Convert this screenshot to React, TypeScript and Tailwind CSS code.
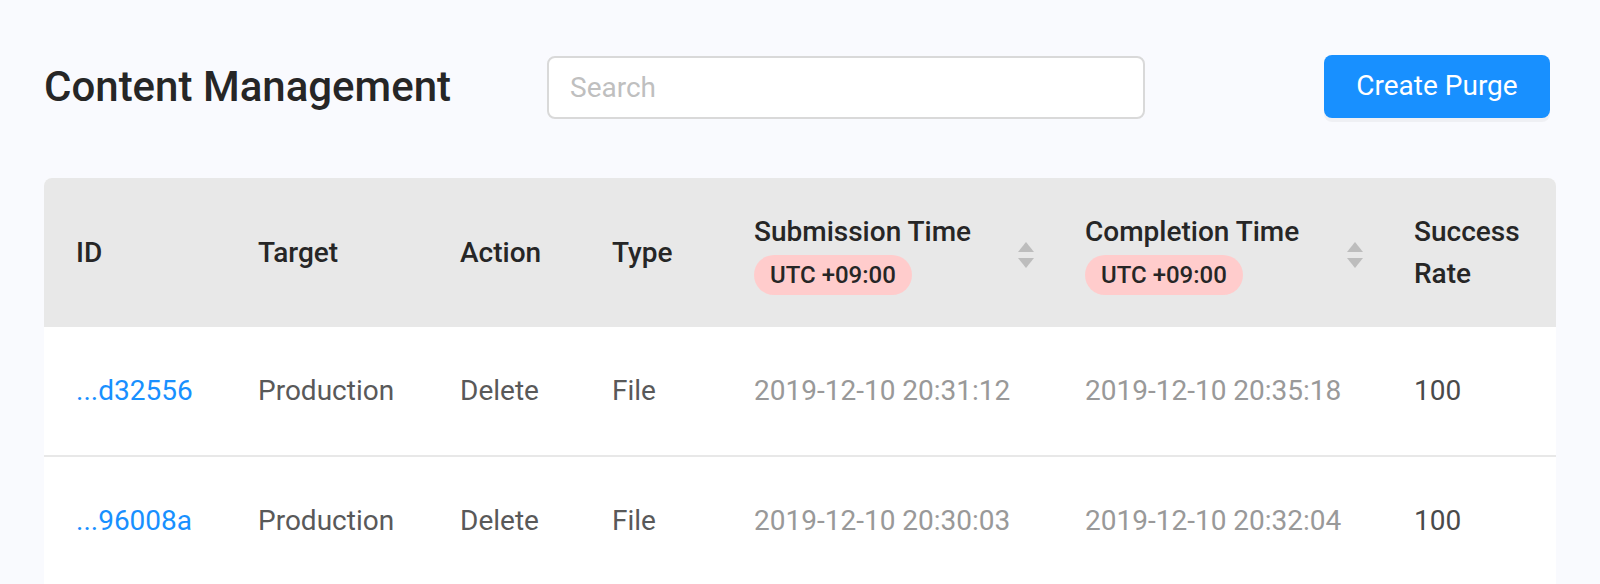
import React from 'react';

interface PurgeRow {
  id: string;
  target: string;
  action: string;
  type: string;
  submitted: string;
  completed: string;
  rate: number;
}

const rows: PurgeRow[] = [
  { id: '...d32556', target: 'Production', action: 'Delete', type: 'File', submitted: '2019-12-10 20:31:12', completed: '2019-12-10 20:35:18', rate: 100 },
  { id: '...96008a', target: 'Production', action: 'Delete', type: 'File', submitted: '2019-12-10 20:30:03', completed: '2019-12-10 20:32:04', rate: 100 },
];

// column widths taken from the layout: id, target, action, type, submission, completion, rate
const cols = 'grid grid-cols-[182px_202px_152px_142px_331px_329px_174px]';

const SortIcon = () => (
  <svg width="16" height="26" viewBox="0 0 16 26" className="mt-[4px] shrink-0">
    <path d="M8 0 L16 10 L0 10 Z" fill="#bdbdbd" />
    <path d="M0 16 L16 16 L8 26 Z" fill="#bdbdbd" />
  </svg>
);

const UtcBadge = () => (
  <span className="mt-[2px] inline-flex h-[40px] items-center self-start rounded-full bg-[#ffcccc] px-[16px] text-[24px] font-medium text-[#262626]">
    UTC +09:00
  </span>
);

const TimeHeader: React.FC<{ label: string }> = ({ label }) => (
  <div className="flex items-center justify-between pl-[32px] pr-[19px]">
    <div className="flex flex-col">
      <span className="leading-[42px]">{label}</span>
      <UtcBadge />
    </div>
    <SortIcon />
  </div>
);

export default function App() {
  return (
    <div
      className="min-h-screen bg-[#f9fafe] px-[44px] pt-[54px]"
      style={{ fontFamily: 'Roboto, "Noto Sans", sans-serif' }}
    >
      <div className="flex h-[64px] items-center">
        <div className="w-[503px]">
          <h1 className="text-[42px] font-medium text-[#262626]">Content Management</h1>
        </div>
        <input
          type="text"
          placeholder="Search"
          className="mt-[2px] h-[63px] w-[598px] rounded-[8px] border-2 border-[#d9d9d9] bg-white px-[21px] text-[28px] text-[#262626] outline-none placeholder:text-[#bfbfbf]"
        />
        <button className="ml-auto mr-[6px] h-[63px] w-[226px] rounded-[8px] bg-[#1890ff] text-[28px] text-white shadow-[0_4px_0_rgba(0,0,0,0.04)]">
          Create Purge
        </button>
      </div>

      <div className="mt-[60px] overflow-hidden rounded-t-[8px] bg-white">
        <div className={`${cols} h-[149px] items-center bg-[#e8e8e8] text-[28px] font-medium text-[#262626]`}>
          <div className="pl-[32px]">ID</div>
          <div className="pl-[32px]">Target</div>
          <div className="pl-[32px]">Action</div>
          <div className="pl-[32px]">Type</div>
          <TimeHeader label="Submission Time" />
          <TimeHeader label="Completion Time" />
          <div className="pl-[32px] leading-[42px]">
            Success
            <br />
            Rate
          </div>
        </div>

        {rows.map((r) => (
          <div key={r.id} className={`${cols} h-[130px] items-center border-b-2 border-[#e8e8e8] text-[28px]`}>
            <div className="pl-[32px] text-[#1890ff]">{r.id}</div>
            <div className="pl-[32px] text-[#595959]">{r.target}</div>
            <div className="pl-[32px] text-[#595959]">{r.action}</div>
            <div className="pl-[32px] text-[#595959]">{r.type}</div>
            <div className="pl-[32px] text-[#999999]">{r.submitted}</div>
            <div className="pl-[32px] text-[#999999]">{r.completed}</div>
            <div className="pl-[32px] text-[#4a4a4a]">{r.rate}</div>
          </div>
        ))}
      </div>
    </div>
  );
}
